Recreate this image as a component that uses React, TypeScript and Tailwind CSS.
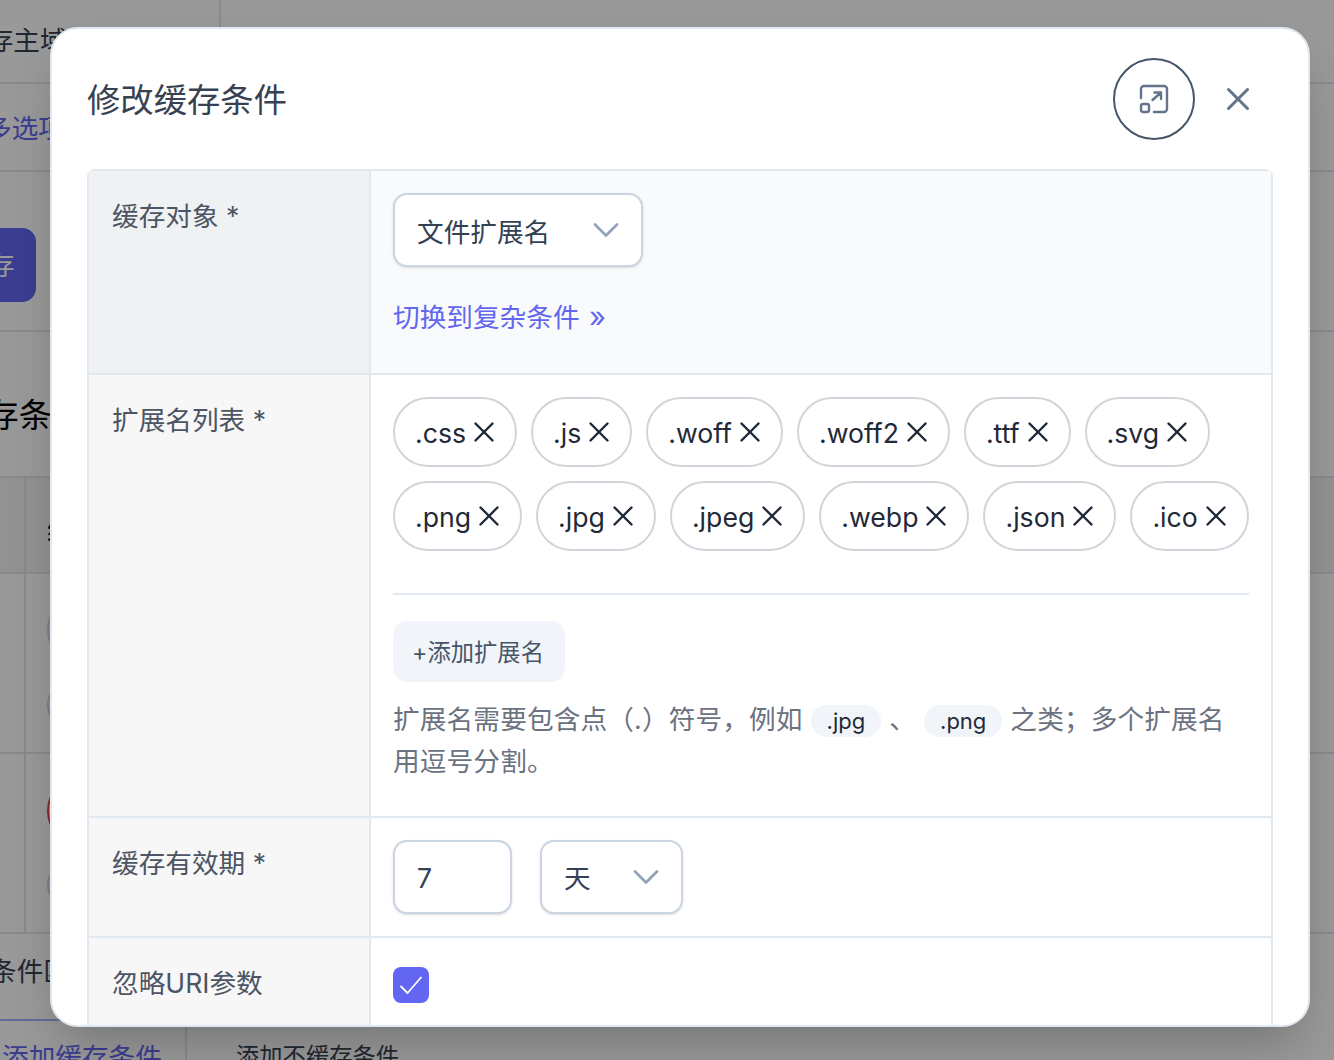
import { ChevronDown, X } from 'lucide-react'

const FONT = "font-['Inter','Noto_Sans_CJK_SC',sans-serif]"

const TAG_ROWS = [
  ['.css', '.js', '.woff', '.woff2', '.ttf', '.svg'],
  ['.png', '.jpg', '.jpeg', '.webp', '.json', '.ico'],
]

function Tag({ label }: { label: string }) {
  return (
    <span className="flex h-[70px] items-center rounded-full border-2 border-[#d1d5db] bg-white pl-[20px] pr-[14px] text-[#1f2937]">
      <span className="pt-[2px]">{label}</span>
      <X className="ml-[1px] h-[34px] w-[34px]" strokeWidth={1.7} />
    </span>
  )
}

function Code({ children }: { children: string }) {
  return (
    <span className="mx-[8px] inline-block h-[32px] rounded-full bg-[#f1f5f9] px-[16px] align-[0px] text-[22px] leading-[32px] tracking-normal text-[#1f2937]">
      {children}
    </span>
  )
}

function Row({ label, tone, children }: { label: string; tone: string; children: React.ReactNode }) {
  return (
    <div className="flex border-b-2 border-[#e2e8f0] last:border-b-0">
      <div className={`w-[282px] shrink-0 border-r-2 border-[#e2e8f0] px-[23px] pt-[23px] leading-[44px] text-[#4b5563] ${tone}`}>
        {label}
      </div>
      {children}
    </div>
  )
}

function Backdrop() {
  return (
    <div className="bg-white text-[26.67px] text-[#374151]">
      <div className="flex h-[84px] border-b-2 border-[#e5e7eb]">
        <div className="w-[221px] border-r-2 border-[#e5e7eb] pt-[20px] leading-[40px]">
          <span className="-ml-[40px] block whitespace-nowrap">缓存主域名</span>
        </div>
      </div>
      <div className="flex h-[88px] items-center border-b-2 border-[#e5e7eb]">
        <span className="-ml-[15px] whitespace-nowrap pt-[2px] text-[#6366f1]">多选项</span>
      </div>
      <div className="h-[160px] border-b-2 border-[#e5e7eb] pt-[56px]">
        <div className="-ml-[60px] flex h-[74px] w-[96px] items-center justify-center rounded-[14px] bg-[#6366f1] text-white">
          保存
        </div>
      </div>
      <div className="h-[144px] pt-[59px] text-[33.33px] leading-[48px] text-black">
        <span className="-ml-[48px] block whitespace-nowrap">缓存条件</span>
      </div>
      <div className="border-y-2 border-[#e5e7eb] bg-[#f3f4f6]">
        <div className="ml-[24px] h-[94px] border-l-2 border-[#e5e7eb] pl-[21px] pt-[32px] leading-[40px] text-[#111827]">
          缓存
        </div>
      </div>
      <div className="border-b-2 border-[#e5e7eb]">
        <div className="ml-[24px] flex h-[178px] flex-col gap-[16px] border-l-2 border-[#e5e7eb] pl-[21px] pt-[21px]">
          <div className="h-[70px] w-[100px] rounded-full border-2 border-[#d1d5db]" />
          <div className="h-[48px] w-[100px] rounded-full border-2 border-[#d1d5db]" />
        </div>
      </div>
      <div className="border-b-2 border-[#e5e7eb]">
        <div className="ml-[24px] flex h-[178px] flex-col gap-[15px] border-l-2 border-[#e5e7eb] pl-[21px] pt-[22px]">
          <div className="h-[70px] w-[100px] rounded-full border-2 border-[#ef4444]" />
          <div className="h-[48px] w-[100px] rounded-full border-2 border-[#d1d5db]" />
        </div>
      </div>
      <div className="h-[85px] pt-[17px] leading-[40px]">
        <span className="-ml-[10px] block whitespace-nowrap">条件匹配</span>
      </div>
      <div className="flex h-[60px]">
        <div className="w-[187px] border-r-2 border-t-2 border-r-[#e5e7eb] border-t-[#a5b4fc] pt-[18px] leading-[36px] text-[#6366f1]">
          <span className="block whitespace-nowrap pl-[2px]">添加缓存条件</span>
        </div>
        <div className="pl-[49px] pt-[20px] text-[23.3px] leading-[36px]">添加不缓存条件</div>
      </div>
    </div>
  )
}

export default function App() {
  return (
    <div className={`relative h-[1060px] w-full overflow-hidden ${FONT}`}>
      <Backdrop />

      {/* Dialog layer */}
      <div className="absolute inset-0 bg-black/40 pl-[50px] pt-[27px]">
        <div className="flex h-[1000px] w-[1260px] flex-col overflow-hidden rounded-[28px] border-2 border-[#e2e8f0] bg-white pl-[35px] pr-[35px] text-[26.67px] shadow-2xl">
          {/* Header */}
          <div className="flex h-[140px] shrink-0 items-start justify-between">
            <div className="pt-[47px] text-[33.33px] leading-[48px] text-[#374151]">修改缓存条件</div>
            <div className="flex items-center gap-[24px] pr-[16px] pt-[29px]">
              <div className="flex h-[82px] w-[82px] items-center justify-center rounded-full border-2 border-[#475569]">
                <svg width="30" height="30" viewBox="0 0 30 30" fill="none" stroke="#64748b" strokeWidth="2.4" strokeLinecap="round" strokeLinejoin="round">
                  <path d="M2 14V5a3 3 0 0 1 3-3h20a3 3 0 0 1 3 3v20a3 3 0 0 1-3 3H15" />
                  <rect x="2" y="20" width="8" height="8" rx="2" />
                  <path d="M13.5 16 22 8.5M15.5 8.5H22V15" />
                </svg>
              </div>
              <X className="h-[38px] w-[38px] text-[#64748b]" strokeWidth={1.9} />
            </div>
          </div>

          {/* Form table */}
          <div className="rounded-t-[8px] border-x-2 border-t-2 border-[#e2e8f0]">
            <Row label="缓存对象 *" tone="bg-[#f0f1f3]">
              <div className="h-[202px] min-w-0 flex-1 bg-[#f8fafc] px-[22px] pt-[22px]">
                <div className="flex h-[74px] w-[250px] items-center justify-between rounded-[14px] border-2 border-[#cbd5e1] bg-white pl-[22px] pr-[13px] text-[#334155] shadow-sm">
                  <span className="pt-[3px]">文件扩展名</span>
                  <ChevronDown className="h-[44px] w-[44px] text-[#94a3b8]" strokeWidth={1.5} />
                </div>
                <div className="mt-[30px] leading-[40px] text-[#6366f1]">
                  切换到复杂条件 <span className="ml-[2px] text-[29px]">»</span>
                </div>
              </div>
            </Row>

            <Row label="扩展名列表 *" tone="bg-[#f7f7f8]">
              <div className="h-[441px] min-w-0 flex-1 px-[22px] pt-[22px]">
                <div className="flex flex-col gap-[14px] border-b-2 border-[#e2e8f0] pb-[42px]">
                  {TAG_ROWS.map((row) => (
                    <div key={row[0]} className="flex gap-[14px]">
                      {row.map((t) => (
                        <Tag key={t} label={t} />
                      ))}
                    </div>
                  ))}
                </div>
                <div className="mt-[26px] flex h-[61px] w-[172px] items-center justify-center rounded-[14px] bg-[#f1f5f9] pr-[2px] pt-[3px] text-[23.3px] text-[#475569]">
                  +添加扩展名
                </div>
                <p className="mt-[16px] text-[26.67px] leading-[42px] tracking-[0.13px] text-[#6b7280]">
                  扩展名需要包含点（.）符号，例如<Code>.jpg</Code>、<Code>.png</Code>之类；多个扩展名用逗号分割。
                </p>
              </div>
            </Row>

            <Row label="缓存有效期 *" tone="bg-[#f7f7f8]">
              <div className="flex h-[118px] min-w-0 flex-1 gap-[28px] px-[22px] pt-[22px]">
                <div className="flex h-[74px] w-[119px] items-center rounded-[14px] border-2 border-[#cbd5e1] bg-white pl-[22px] pt-[2px] text-[#334155] shadow-sm">
                  7
                </div>
                <div className="flex h-[74px] w-[143px] items-center justify-between rounded-[14px] border-2 border-[#cbd5e1] bg-white pl-[22px] pr-[13px] text-[#334155] shadow-sm">
                  <span className="pt-[2px]">天</span>
                  <ChevronDown className="h-[44px] w-[44px] text-[#94a3b8]" strokeWidth={1.5} />
                </div>
              </div>
            </Row>

            <Row label="忽略URI参数" tone="bg-[#f7f7f8]">
              <div className="h-[120px] min-w-0 flex-1 px-[22px] pt-[29px]">
                <div className="flex h-[36px] w-[36px] items-center justify-center rounded-[8px] bg-[#6366f1]">
                  <svg width="26" height="26" viewBox="0 0 26 26" fill="none" stroke="white" strokeWidth="1.8" strokeLinecap="round" strokeLinejoin="round">
                    <path d="M3 14.5 9.5 21 23 5.5" />
                  </svg>
                </div>
              </div>
            </Row>
          </div>
        </div>
      </div>
    </div>
  )
}
